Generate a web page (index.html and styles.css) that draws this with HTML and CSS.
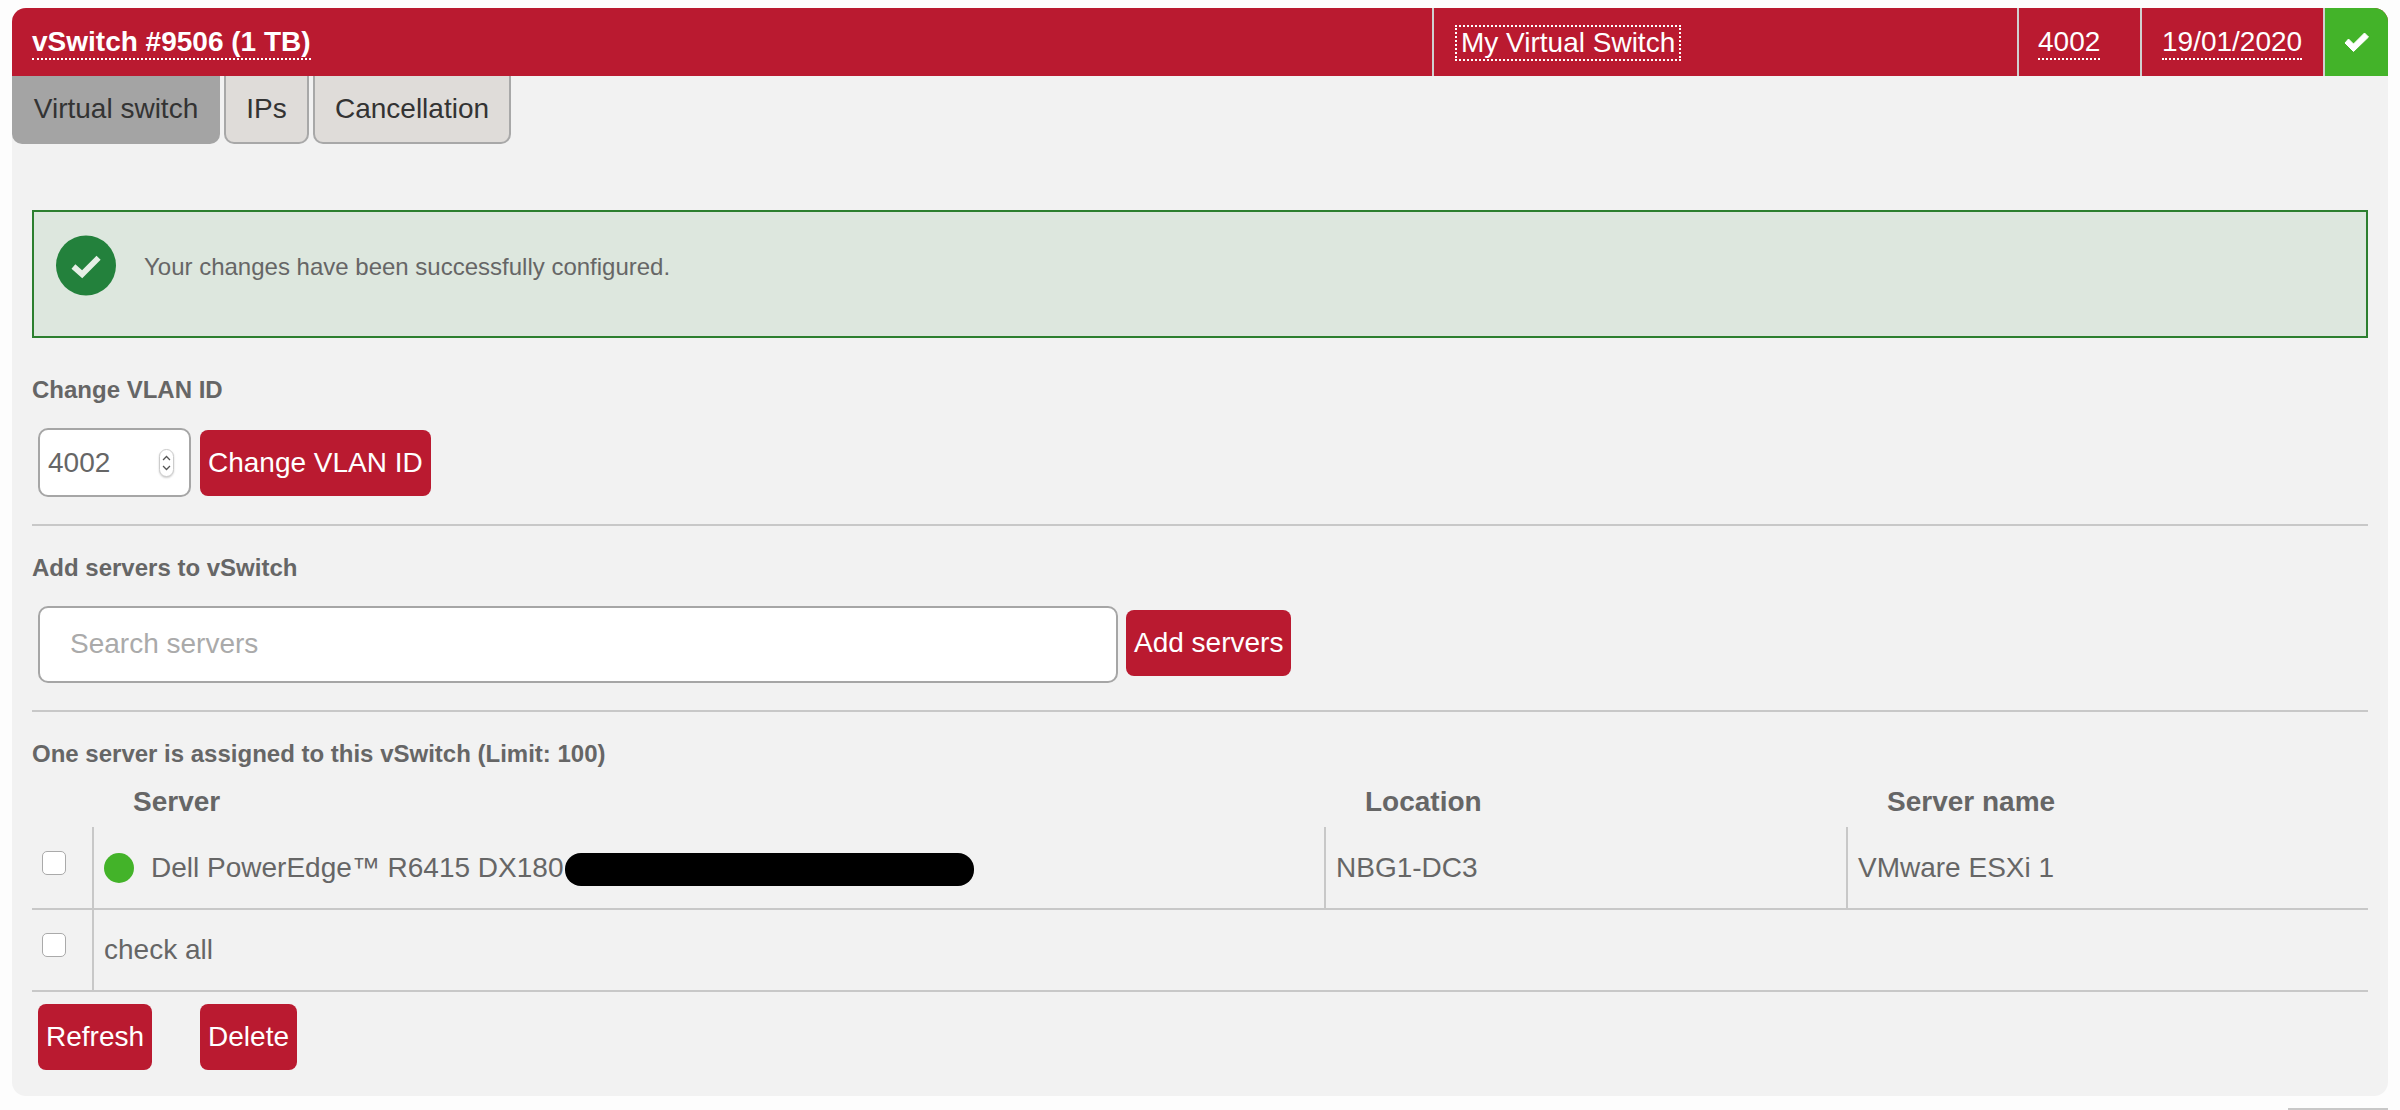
FILE: index.html
```html
<!DOCTYPE html>
<html>
<head>
    <meta charset="utf-8">
    <title>vSwitch #9506</title>
    <link rel="stylesheet" href="styles.css">
</head>
<body>
    <div class="panel">
        <div class="head">
            <div class="head-cell head-title"><span class="dotted">vSwitch #9506 (1 TB)</span></div>
            <div class="head-cell head-name"><span class="dotted editable">My Virtual Switch</span></div>
            <div class="head-cell head-vlan"><span class="dotted">4002</span></div>
            <div class="head-cell head-date"><span class="dotted">19/01/2020</span></div>
            <div class="head-status">
                <svg width="25" height="20" viewBox="0 0 25 20"><path d="M1 11 4.500 7 9.500 12 20.500 1 24.500 5 9.500 19.500Z" fill="#fff" stroke="#fff" stroke-width="1" stroke-linejoin="round"/></svg>
            </div>
        </div>
        <div class="tabs">
            <div class="tab tab-active">Virtual switch</div>
            <div class="tab">IPs</div>
            <div class="tab">Cancellation</div>
        </div>
        <div class="content">
            <div class="alert">
                <svg class="alert-icon" width="60" height="61" viewBox="0 0 62 62">
                    <circle cx="31" cy="31" r="31" fill="#23813c"/>
                    <path d="M18 32 27 40 44 23" fill="none" stroke="#e6efe6" stroke-width="6"/>
                </svg>
                <span class="alert-text">Your changes have been successfully configured.</span>
            </div>

            <div class="label label-first">Change VLAN ID</div>
            <div class="row row-vlan">
                <div class="number">
                    <input class="field field-number" type="text" value="4002">
                    <div class="spinner">
                        <svg width="15" height="28" viewBox="0 0 15 28"><path d="M3.5 10.5 7.5 6.5 11.500 10.500M3.500 17.500 7.500 21.500 11.500 17.500" fill="none" stroke="#555" stroke-width="1.500"/></svg>
                    </div>
                </div>
                <button class="btn">Change VLAN ID</button>
            </div>
            <div class="divider"></div>

            <div class="label label-search">Add servers to vSwitch</div>
            <div class="row row-search">
                <input class="field field-search" type="text" placeholder="Search servers">
                <button class="btn">Add servers</button>
            </div>
            <div class="divider"></div>

            <div class="label label-table">One server is assigned to this vSwitch (Limit: 100)</div>
            <table class="servers">
                <thead>
                    <tr>
                        <th class="col-check"></th>
                        <th class="col-server">Server</th>
                        <th class="col-location">Location</th>
                        <th>Server name</th>
                    </tr>
                </thead>
                <tbody>
                    <tr>
                        <td><input class="check" type="checkbox"></td>
                        <td>
                            <div class="server-cell">
                                <span class="dot"></span>
                                <span>Dell PowerEdge™ R6415 DX180</span>
                                <span class="redact"></span>
                            </div>
                        </td>
                        <td>NBG1-DC3</td>
                        <td>VMware ESXi 1</td>
                    </tr>
                    <tr>
                        <td><input class="check" type="checkbox"></td>
                        <td colspan="3">check all</td>
                    </tr>
                </tbody>
            </table>
            <div class="actions">
                <button class="btn">Refresh</button>
                <button class="btn">Delete</button>
            </div>
        </div>
    </div>
    <div class="next-panel"></div>
</body>
</html>
```

FILE: styles.css
```css
html, body {
    height: 100%;
    overflow: hidden;
}
body {
    margin: 0;
    padding: 8px 12px 0;
    background-color: #fdfdfd;
    font-family: "Liberation Sans", Arial, sans-serif;
    font-size: 28px;
    color: #666;
    position: relative;
    box-sizing: border-box;
}
.panel {
    background-color: #f2f2f2;
    border-radius: 14px;
    height: 1088px;
}

/* red header */
.head {
    display: flex;
    height: 68px;
    background-color: #ba1a30;
    color: #fff;
    border-radius: 14px 14px 0 0;
    overflow: hidden;
}
.head-cell {
    display: flex;
    align-items: center;
    border-left: 2px solid #d0d0d0;
    box-sizing: border-box;
    line-height: 32px;
    padding-top: 2px;
}
.head-title {
    width: 1420px;
    border-left: none;
    padding-left: 20px;
    font-weight: bold;
}
.head-name {
    width: 585px;
    padding-left: 21px;
}
.head-vlan {
    width: 123px;
    padding-left: 19px;
}
.head-date {
    width: 183px;
    padding-left: 20px;
}
.head-status {
    width: 65px;
    background-color: #43b329;
    border-left: 2px solid #d0d0d0;
    box-sizing: border-box;
    display: flex;
    align-items: center;
    justify-content: center;
}
.dotted {
    border-bottom: 2px dotted #fff;
}
.editable {
    border: 2px dotted #fff;
    padding: 0 4px;
}

/* tabs */
.tabs {
    display: flex;
    gap: 4px;
    height: 68px;
}
.tab {
    display: flex;
    align-items: center;
    justify-content: center;
    box-sizing: border-box;
    width: 85px;
    background-color: #dfdcd9;
    color: #333;
    border: 2px solid #a8a8a8;
    border-top: none;
    border-radius: 0 0 10px 10px;
}
.tab:last-child {
    width: 198px;
}
.tab-active {
    width: 208px;
    background-color: #a4a4a4;
    border-color: #a4a4a4;
}

/* page body */
.content {
    padding: 66px 20px 0;
}
.alert {
    display: flex;
    align-items: center;
    gap: 28px;
    box-sizing: border-box;
    height: 128px;
    padding: 0 22px 18px;
    background-color: #dde7de;
    border: 2px solid #2c7f2f;
    font-size: 24px;
}
.alert-text {
    padding-top: 3px;
}
.label {
    font-size: 24px;
    font-weight: bold;
    line-height: 28px;
}
.label-first {
    margin-top: 38px;
}
.label-search {
    margin-top: 28px;
}
.label-table {
    margin-top: 28px;
}
.row {
    display: flex;
    align-items: center;
    gap: 8px;
    margin: 24px 0 27px 6px;
}
.row-vlan {
    gap: 9px;
}
.row-search .btn {
    margin-bottom: 4px;
}
.divider {
    height: 2px;
    background-color: #c8c8c8;
}
.field {
    box-sizing: border-box;
    border: 2px solid #a6a6a6;
    border-radius: 10px;
    background-color: #fff;
    font-family: inherit;
    font-size: 28px;
    color: #666;
    outline: none;
}
.field::placeholder {
    color: #aaa;
}
.number {
    position: relative;
}
.field-number {
    display: block;
    width: 153px;
    height: 69px;
    padding: 0 8px;
}
.spinner {
    position: absolute;
    top: 21px;
    right: 17px;
    width: 15px;
    height: 28px;
    background-color: #fff;
    border: 1px solid #ccc;
    border-radius: 8px;
    box-sizing: border-box;
    box-shadow: 0 1px 2px rgba(0,0,0,0.2);
    display: flex;
    align-items: center;
    justify-content: center;
}
.field-search {
    width: 1080px;
    height: 77px;
    padding: 0 30px 2px;
}
.btn {
    height: 66px;
    padding: 0 8px;
    border: none;
    border-radius: 8px;
    background-color: #ba1a30;
    color: #fff;
    font-family: inherit;
    font-size: 28px;
}

/* server table */
.servers {
    width: 2336px;
    table-layout: fixed;
    border-collapse: collapse;
}
.servers th {
    height: 59px;
    padding: 9px 0 0 40px;
    box-sizing: border-box;
    text-align: left;
    font-size: 28px;
}
.col-check {
    width: 61px;
}
.col-server {
    width: 1232px;
}
.col-location {
    width: 522px;
}
.servers td {
    height: 82px;
    padding: 0 0 0 10px;
    box-sizing: border-box;
    border-left: 2px solid #c8c8c8;
    border-bottom: 2px solid #c8c8c8;
}
.servers td:first-child {
    border-left: none;
}
.check {
    appearance: none;
    display: block;
    width: 24px;
    height: 24px;
    margin: 0 0 10px 0;
    background-color: #fff;
    border: 1px solid #aaa;
    border-radius: 5px;
}
.server-cell {
    display: flex;
    align-items: center;
}
.dot {
    width: 30px;
    height: 30px;
    margin-right: 17px;
    border-radius: 50%;
    background-color: #43b329;
}
.redact {
    width: 409px;
    height: 33px;
    margin: 4px 0 0 2px;
    border-radius: 16px;
    background-color: #000;
}
.actions {
    display: flex;
    gap: 48px;
    margin: 12px 0 0 6px;
}
.next-panel {
    position: absolute;
    left: 2288px;
    top: 1108px;
    width: 100px;
    height: 2px;
    background-color: #c8c8c8;
}
```
